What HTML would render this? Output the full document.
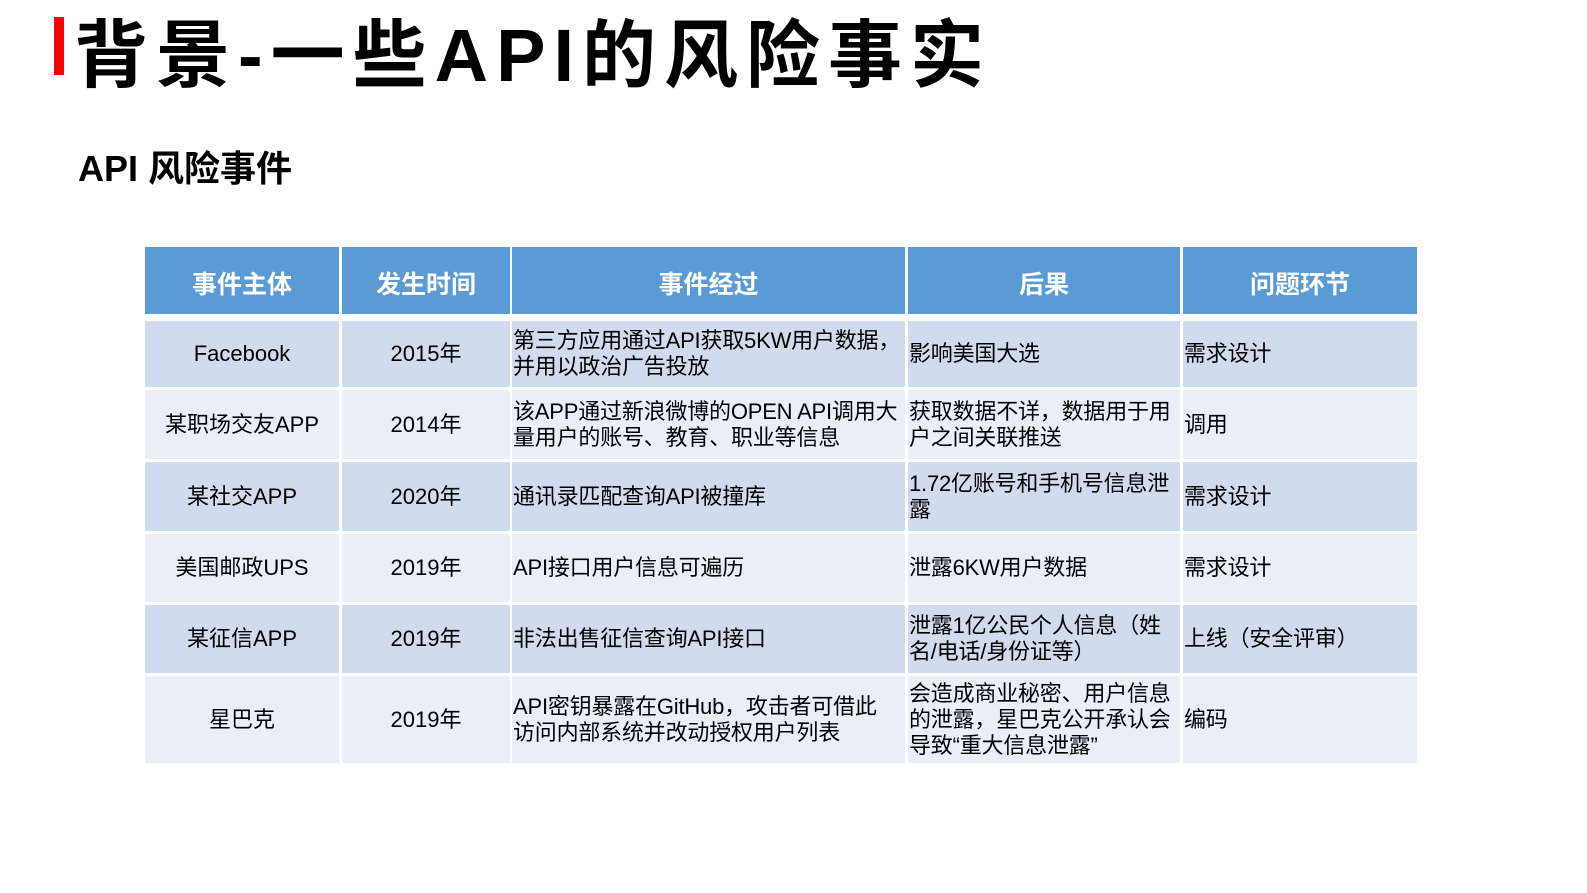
<!DOCTYPE html>
<html><head><meta charset="utf-8"><style>
body{margin:0;width:1587px;height:893px;background:#fff;position:relative;overflow:hidden;font-family:"Liberation Sans","Noto Sans CJK SC",sans-serif;}
.bar{position:absolute;left:54px;top:17px;width:10px;height:58px;background:#f00;}
.title{position:absolute;left:74px;top:6px;font-size:74px;font-weight:bold;letter-spacing:8px;line-height:100px;white-space:nowrap;color:#000;}
.sub{position:absolute;left:78px;top:146px;font-size:36px;font-weight:bold;line-height:46px;color:#000;}
.c{position:absolute;display:flex;align-items:center;font-size:22px;line-height:26px;color:#000;box-sizing:border-box;white-space:nowrap;overflow:visible;}
.h{background:#5b9bd5;color:#fff;font-weight:bold;font-size:25px;justify-content:center;padding-top:8px;}
.o{background:#d0dcee;}.e{background:#e9eef7;}
.ctr{justify-content:center;text-align:center;}
.l{padding-left:1px;letter-spacing:-0.2px;}
</style></head><body>
<div class="bar"></div>
<div class="title">背景-一些API的风险事实</div>
<div class="sub">API 风险事件</div>
<div id="t"></div>
<script>
const cols=[[145,339],[342,510],[512,905],[908,1180],[1183,1417]];
const rows=[[247,314],[321,387],[390,459],[462,531],[534,602],[605,673],[676,763]];
const data=[
["事件主体","发生时间","事件经过","后果","问题环节"],
["Facebook","2015年","第三方应用通过API获取5KW用户数据，<br>并用以政治广告投放","影响美国大选","需求设计"],
["某职场交友APP","2014年","该APP通过新浪微博的OPEN API调用大<br>量用户的账号、教育、职业等信息","获取数据不详，数据用于用<br>户之间关联推送","调用"],
["某社交APP","2020年","通讯录匹配查询API被撞库","1.72亿账号和手机号信息泄<br>露","需求设计"],
["美国邮政UPS","2019年","API接口用户信息可遍历","泄露6KW用户数据","需求设计"],
["某征信APP","2019年","非法出售征信查询API接口","泄露1亿公民个人信息（姓<br>名/电话/身份证等）","上线（安全评审）"],
["星巴克","2019年","API密钥暴露在GitHub，攻击者可借此<br>访问内部系统并改动授权用户列表","会造成商业秘密、用户信息<br>的泄露，星巴克公开承认会<br>导致“重大信息泄露”","编码"]];
let h="";
rows.forEach((r,i)=>{cols.forEach((c,j)=>{
let cls=i==0?"h":(i%2?"o":"e")+(j<2?" ctr":" l");
h+=`<div class="c ${cls}" style="left:${c[0]}px;top:${r[0]}px;width:${c[1]-c[0]}px;height:${r[1]-r[0]}px"><div>${data[i][j]}</div></div>`;});});
document.getElementById("t").innerHTML=h;
</script>
</body></html>
